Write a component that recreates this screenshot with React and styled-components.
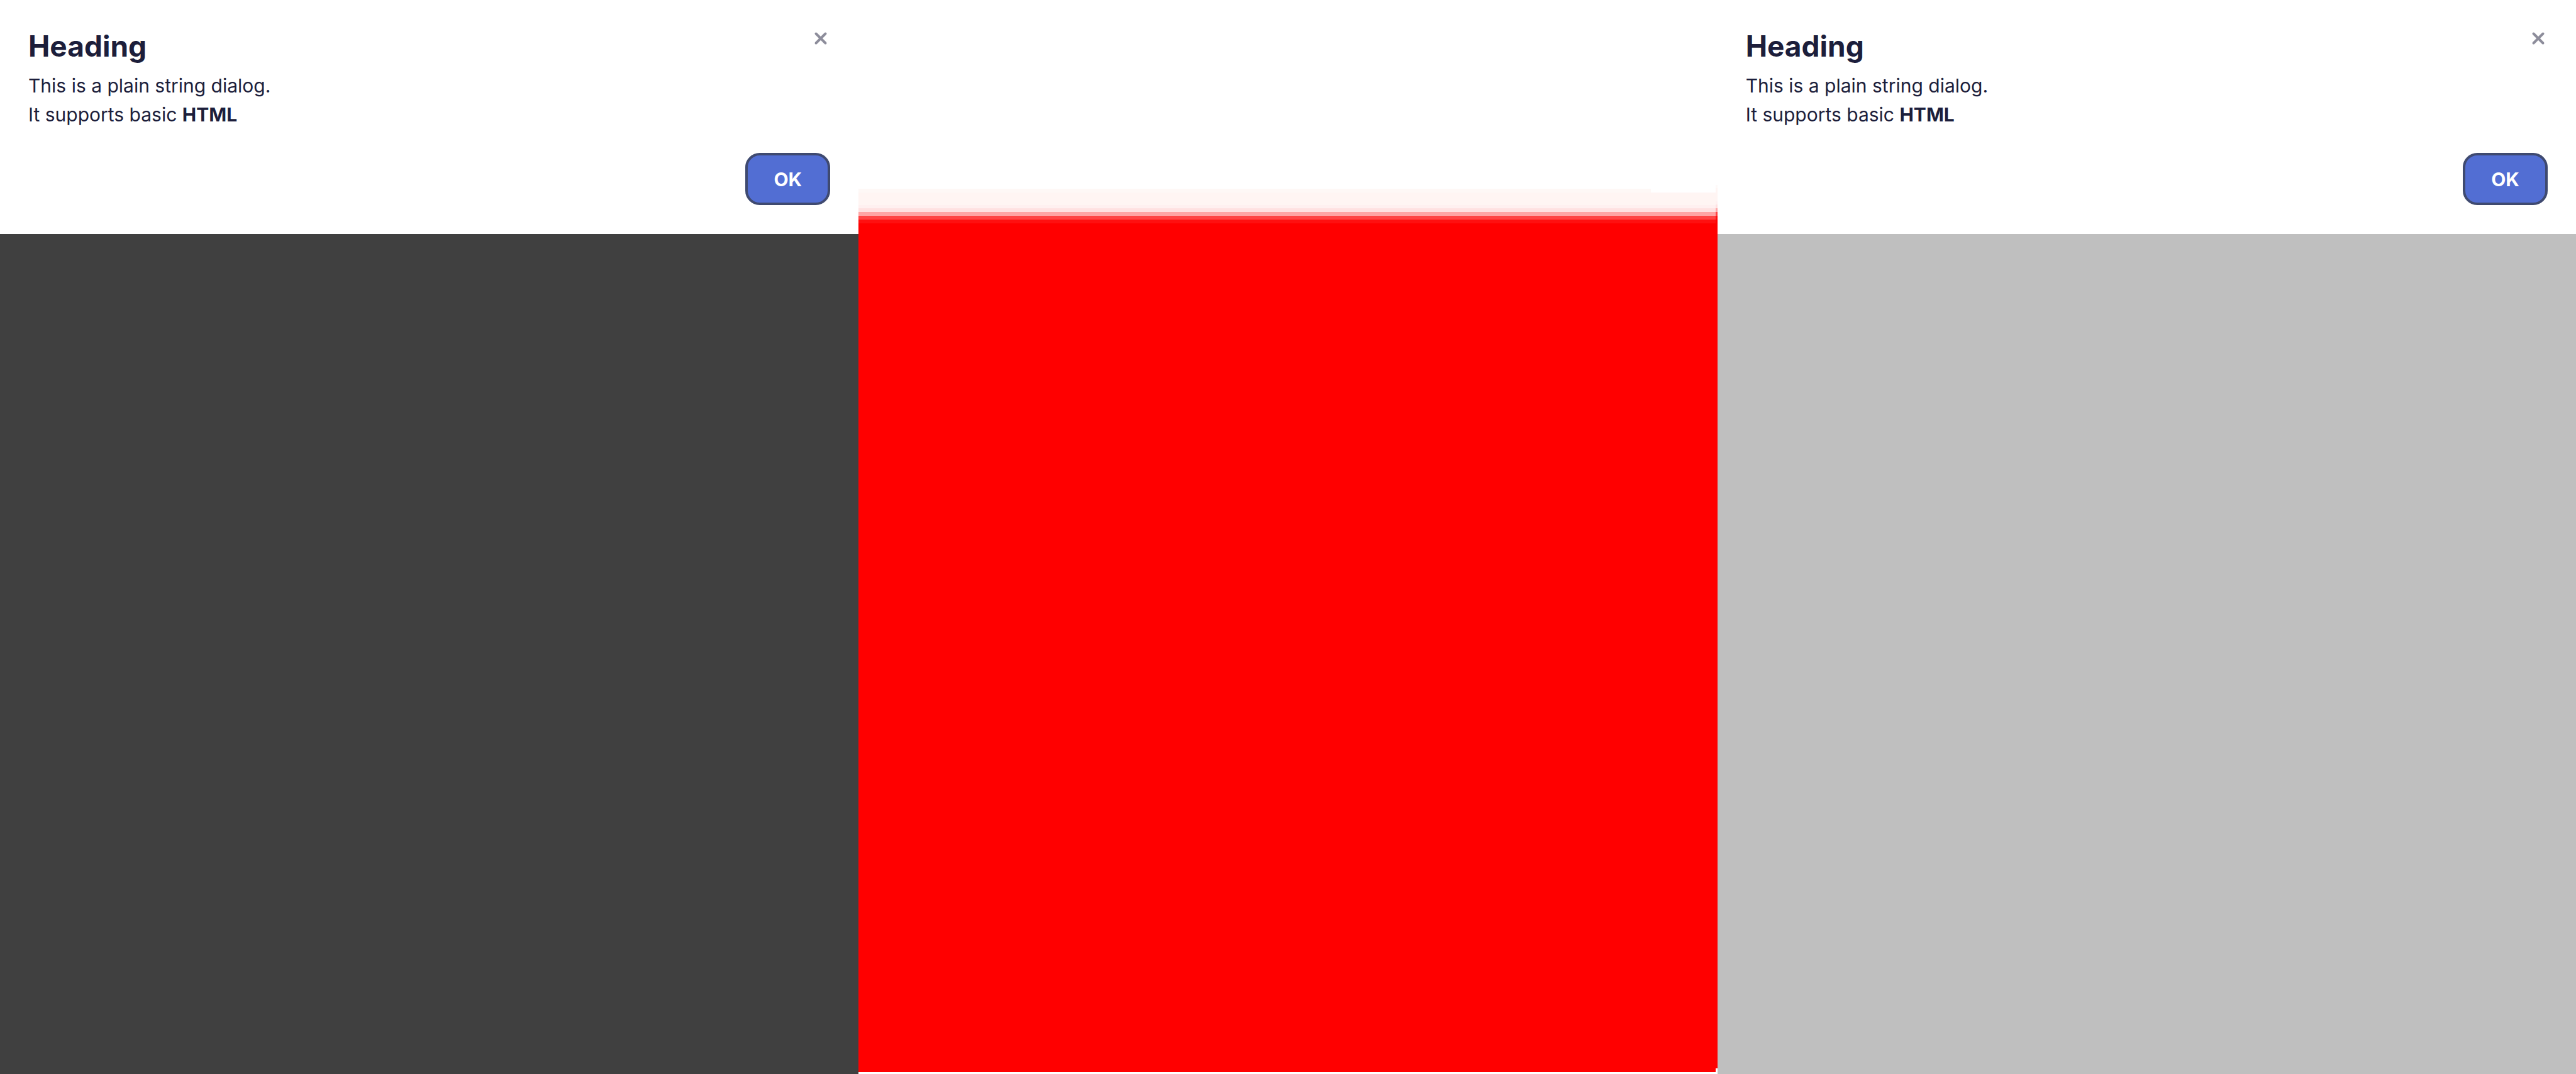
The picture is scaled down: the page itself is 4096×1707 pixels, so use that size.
import React from "react";
import styled, { createGlobalStyle } from "styled-components";

const GlobalStyle = createGlobalStyle`
  *, *::before, *::after { box-sizing: border-box; }
  body {
    margin: 0;
    background: #fff;
    color: #1c1e3b;
    font-family: Inter, "Open Sans", sans-serif;
  }
`;

const Comparison = styled.main`
  display: grid;
  grid-template-columns: repeat(3, 1fr);
  min-height: 100vh;
`;

const Pane = styled.section`
  display: flex;
  flex-direction: column;
  background: ${(p) => p.$backdrop};
`;

const Dialog = styled.div`
  display: flex;
  flex-direction: column;
  padding: 46px 45px;
  background: #fff;
`;

const DialogHeader = styled.header`
  display: flex;
  justify-content: space-between;
  align-items: flex-start;
`;

const Title = styled.h2`
  margin: 0;
  font-size: 46px;
  line-height: 54px;
  font-weight: 700;
`;

const CloseButton = styled.button`
  display: flex;
  width: 30px;
  height: 30px;
  padding: 0;
  border: 0;
  background: none;
  color: #8d8d9b;
`;

const Message = styled.p`
  margin: 13px 0 38px;
  font-size: 30px;
  line-height: 46px;
`;

const Actions = styled.footer`
  display: flex;
  justify-content: flex-end;
`;

const ConfirmButton = styled.button`
  height: 83px;
  min-width: 135px;
  padding: 0;
  border: 4px solid #3f4a70;
  border-radius: 23px;
  background: #526ed3;
  color: #fff;
  font: inherit;
  font-size: 30px;
  line-height: 46px;
  font-weight: 700;
`;

const DiffPane = styled.section`
  display: flex;
`;

const Strip = styled.div`
  display: flex;
  flex-direction: column;
  flex: ${(p) => (p.$width ? `0 0 ${p.$width}px` : "1 1 0")};
`;

const Band = styled.div`
  flex: ${(p) => (p.$height ? `0 0 ${p.$height}px` : "1 1 0")};
  background: ${(p) => p.$color};
`;

const FADE_BANDS = [
  [20, "#fff5f3"],
  [5, "#fff0f0"],
  [6, "#ffe1e1"],
  [6, "#ffa4a4"],
  [6, "#ff4343"],
  [6, "#ff1010"],
];

const BODY_BANDS = [
  [300, "#ffffff"],
  [6, "#fef8f6"],
  ...FADE_BANDS,
  [0, "#ff0000"],
  [3, "#ffffff"],
];

const SHORT_BANDS = [
  [306, "#ffffff"],
  ...FADE_BANDS,
  [0, "#ff0000"],
  [3, "#ffffff"],
];

const EDGE_BANDS = [
  [294, "#ffffff"],
  [5, "#fef9f8"],
  [21, "#fff5f3"],
  [5, "#fff0f0"],
  [6, "#ffe1e1"],
  [6, "#ffa4a4"],
  [6, "#ff4343"],
  [6, "#ff1010"],
  [0, "#ff0000"],
  [9, "#ffffff"],
];

function DiffStrip({ bands, width }) {
  return (
    <Strip $width={width}>
      {bands.map(([height, color], i) => (
        <Band key={i} $height={height} $color={color} />
      ))}
    </Strip>
  );
}

function DialogPane({ backdrop }) {
  return (
    <Pane $backdrop={backdrop}>
      <Dialog role="dialog" aria-label="Heading">
        <DialogHeader>
          <Title>Heading</Title>
          <CloseButton type="button" aria-label="Close">
            <svg width="30" height="30" viewBox="0 0 30 30" fill="none" stroke="currentColor" strokeWidth="4" strokeLinecap="round" aria-hidden="true">
              <path d="M7.5 7.5l15 15M22.5 7.5l-15 15" />
            </svg>
          </CloseButton>
        </DialogHeader>
        <Message>
          This is a plain string dialog.
          <br />
          It supports basic <b>HTML</b>
        </Message>
        <Actions>
          <ConfirmButton type="button">OK</ConfirmButton>
        </Actions>
      </Dialog>
    </Pane>
  );
}

export default function App() {
  return (
    <>
      <GlobalStyle />
      <Comparison>
        <DialogPane backdrop="#404040" />
        <DiffPane aria-label="Difference">
          <DiffStrip bands={BODY_BANDS} />
          <DiffStrip bands={SHORT_BANDS} width={103} />
          <DiffStrip bands={EDGE_BANDS} width={3} />
        </DiffPane>
        <DialogPane backdrop="#bfbfbf" />
      </Comparison>
    </>
  );
}
